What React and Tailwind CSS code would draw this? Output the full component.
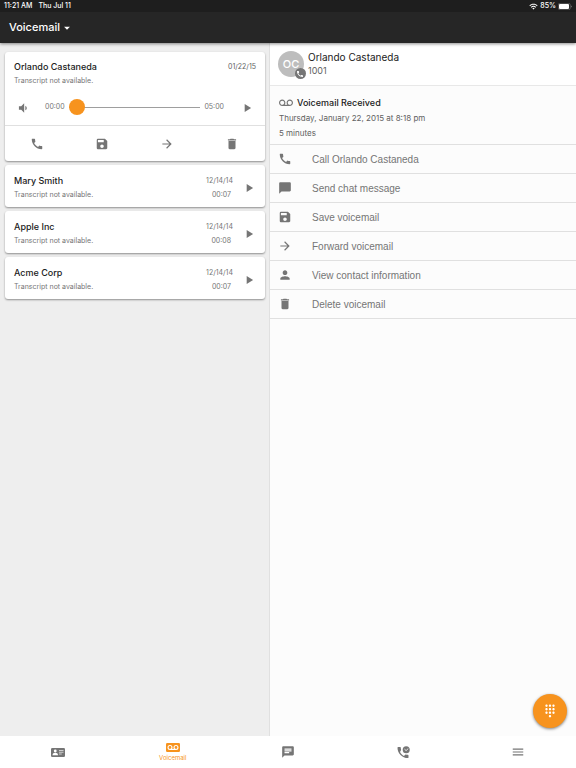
import React, { useState } from "react";
import {
    MdArrowDropDown,
    MdArrowForward,
    MdCall,
    MdChat,
    MdChatBubble,
    MdDelete,
    MdDialpad,
    MdMenu,
    MdPerson,
    MdPlayArrow,
    MdSave,
    MdVoicemail,
    MdVolumeDown,
    MdWifi,
} from "react-icons/md";

const messages = [
    { name: "Mary Smith", date: "12/14/14", length: "00:07" },
    { name: "Apple Inc", date: "12/14/14", length: "00:08" },
    { name: "Acme Corp", date: "12/14/14", length: "00:07" },
];

const cardActions = [
    { label: "Call", icon: MdCall },
    { label: "Save", icon: MdSave },
    { label: "Forward", icon: MdArrowForward },
    { label: "Delete", icon: MdDelete },
];

const detailActions = [
    { label: "Call Orlando Castaneda", icon: MdCall },
    { label: "Send chat message", icon: MdChatBubble },
    { label: "Save voicemail", icon: MdSave },
    { label: "Forward voicemail", icon: MdArrowForward },
    { label: "View contact information", icon: MdPerson },
    { label: "Delete voicemail", icon: MdDelete },
];

function ContactCardIcon() {
    return (
        <svg viewBox="0 0 28 18" className="h-[9px] w-[14px]" aria-hidden="true">
            <rect width="28" height="18" rx="2.5" fill="#757575" />
            <circle cx="8.5" cy="6" r="2.8" fill="#fff" />
            <path d="M3 14.5c0-3.2 2.6-4.8 5.5-4.8s5.500 1.600 5.500 4.800z" fill="#fff" />
            <path d="M16 5h9M16 8.500h9M16 12h5.500" stroke="#fff" strokeWidth="1.300" />
        </svg>
    );
}

function VoicemailTabIcon() {
    return (
        <svg viewBox="0 0 28 18" className="h-[9px] w-[14px]" aria-hidden="true">
            <rect width="28" height="18" rx="2.5" fill="#f7931e" />
            <g fill="none" stroke="#fff" strokeWidth="2.2">
                <circle cx="8" cy="9" r="3.9" />
                <circle cx="20" cy="9" r="3.9" />
                <path d="M8 12.9h12" />
            </g>
        </svg>
    );
}

function CallHistoryIcon() {
    return (
        <svg viewBox="0 0 24 24" className="size-[13px]" aria-hidden="true">
            <path
                d="M5.6 11.2c1.6 3.1 4.1 5.6 7.2 7.2l2.4-2.4c.3-.3.7-.4 1.1-.3 1.2.4 2.5.6 3.8.6.6 0 1.1.5 1.1 1.1v3.8c0 .6-.5 1.1-1.1 1.1C9.8 22.3.9 13.4.9 3.1.9 2.5 1.4 2 2 2h3.900c.6 0 1.1.5 1.1 1.1 0 1.3.2 2.6.6 3.8.1.4 0 .8-.3 1.1z"
                fill="#757575"
            />
            <circle cx="17" cy="7" r="6.5" fill="#757575" />
            <path d="M13.8 5.8l3 2.7 4-3.8" fill="none" stroke="#fff" strokeWidth="1.5" />
        </svg>
    );
}

function BatteryIcon() {
    return (
        <svg viewBox="0 0 28 14" className="h-[7px] w-[14px]" aria-hidden="true">
            <rect x="0.5" y="0.5" width="24" height="13" rx="3.5" fill="none" stroke="#8a8a8a" />
            <rect x="2" y="2" width="20" height="10" rx="2" fill="#fff" />
            <path d="M26 5v4c2-.8 2-3.2 0-4z" fill="#8a8a8a" />
        </svg>
    );
}

function Header() {
    return (
        <header className="relative z-10 shrink-0 bg-[#262626] text-white shadow-[0_1px_3px_rgba(0,0,0,0.45)]">
            <div className="flex h-3 items-center justify-between bg-[#1e1e1e] px-1 text-[7px] font-medium">
                <div className="flex gap-[6px]">
                    <span>11:21 AM</span>
                    <span>Thu Jul 11</span>
                </div>
                <div className="flex items-center gap-[2px]">
                    <MdWifi className="size-[9px]" />
                    <span>85%</span>
                    <BatteryIcon />
                </div>
            </div>
            <button type="button" className="flex h-[31px] items-center pl-[9px] text-[11px] font-medium">
                Voicemail
                <MdArrowDropDown className="size-[14px]" />
            </button>
        </header>
    );
}

function ActiveCard() {
    const [position, setPosition] = useState(0);

    return (
        <article className="rounded-[3px] bg-white shadow-[0_1px_2px_rgba(0,0,0,0.4)]">
            <div className="flex justify-between px-[9px] pt-2">
                <div>
                    <h2 className="text-[9px] leading-[14px] font-medium text-[#212121]">Orlando Castaneda</h2>
                    <p className="text-[7px] leading-[14px] text-[#757575]">Transcript not available.</p>
                </div>
                <span className="text-[7px] leading-[14px] text-[#616161]">01/22/15</span>
            </div>
            <div className="flex h-[37px] items-center pt-[2px] pr-[11px] pl-[11px] text-[7px] text-[#757575]">
                <button type="button" aria-label="Speaker">
                    <MdVolumeDown className="size-[14px]" />
                </button>
                <span className="ml-[15px]">00:00</span>
                <input
                    type="range"
                    aria-label="Playback position"
                    min="0"
                    max="300"
                    value={position}
                    onChange={(e) => setPosition(Number(e.target.value))}
                    className="mx-1 h-4 min-w-0 flex-1 appearance-none bg-transparent [&::-webkit-slider-runnable-track]:h-px [&::-webkit-slider-runnable-track]:bg-[#9e9e9e] [&::-webkit-slider-thumb]:-mt-2 [&::-webkit-slider-thumb]:size-4 [&::-webkit-slider-thumb]:appearance-none [&::-webkit-slider-thumb]:rounded-full [&::-webkit-slider-thumb]:bg-[#f7931e]"
                />
                <span>05:00</span>
                <button type="button" aria-label="Play" className="ml-4">
                    <MdPlayArrow className="size-[14px]" />
                </button>
            </div>
            <div className="grid h-9 grid-cols-4 border-t border-[#e0e0e0] text-[#757575]">
                {cardActions.map(({ label, icon: Icon }) => (
                    <button key={label} type="button" aria-label={label} className="flex items-center justify-center">
                        <Icon className="size-[14px]" />
                    </button>
                ))}
            </div>
        </article>
    );
}

function MessageCard({ name, date, length }) {
    return (
        <article className="flex items-center rounded-[3px] bg-white px-[9px] pt-[9px] pb-[5px] shadow-[0_1px_2px_rgba(0,0,0,0.4)]">
            <div className="flex-1">
                <h2 className="text-[9px] leading-[14px] font-medium text-[#212121]">{name}</h2>
                <p className="text-[7px] leading-[14px] text-[#757575]">Transcript not available.</p>
            </div>
            <div className="mr-[9px] text-right text-[7px] leading-[14px] text-[#757575]">
                <p>{date}</p>
                <p className="pr-[2px]">{length}</p>
            </div>
            <button type="button" aria-label={`Play ${name}`} className="text-[#757575]">
                <MdPlayArrow className="size-[14px]" />
            </button>
        </article>
    );
}

function Details() {
    return (
        <section className="min-w-0 flex-1 border-l border-[#e0e0e0] bg-[#fcfcfc]">
            <div className="flex h-[43px] items-center border-b border-[#e8e8e8] bg-white pl-2">
                <div className="relative flex size-[26px] items-center justify-center rounded-full bg-[#bdbdbd] text-[11px] font-medium text-white">
                    OC
                    <span className="absolute -right-[2px] -bottom-[2px] flex size-[11px] items-center justify-center rounded-full bg-[#757575]">
                        <MdCall className="size-2" />
                    </span>
                </div>
                <div className="ml-1 leading-[14px]">
                    <h2 className="text-[10px] text-[#212121]">Orlando Castaneda</h2>
                    <p className="text-[9px] text-[#616161]">1001</p>
                </div>
            </div>
            <div className="border-b border-[#e0e0e0] pt-2 pb-[3px] pl-[9px] text-[8px] leading-[15px] text-[#616161]">
                <h3 className="flex items-center gap-1 text-[9px] leading-[17px] font-medium text-[#212121]">
                    <MdVoicemail className="size-[14px] text-[#757575]" />
                    Voicemail Received
                </h3>
                <p>Thursday, January 22, 2015 at 8:18 pm</p>
                <p>5 minutes</p>
            </div>
            <ul className="font-['Liberation_Sans',sans-serif] text-[10px] text-[#757575]">
                {detailActions.map(({ label, icon: Icon }) => (
                    <li key={label} className="border-b border-[#e0e0e0]">
                        <button type="button" className="flex h-7 w-full items-center gap-5 pl-2">
                            <Icon className="size-[14px]" />
                            {label}
                        </button>
                    </li>
                ))}
            </ul>
        </section>
    );
}

function BottomNav() {
    return (
        <nav className="grid h-8 shrink-0 grid-cols-5 bg-white text-[#757575]">
            <a href="#contacts" aria-label="Contacts" className="flex items-center justify-center">
                <ContactCardIcon />
            </a>
            <a href="#voicemail" className="flex flex-col items-center justify-center gap-[2px] text-[6px] leading-[8px] text-[#f7931e]">
                <VoicemailTabIcon />
                Voicemail
            </a>
            <a href="#chat" aria-label="Chat" className="flex items-center justify-center">
                <MdChat className="size-[14px]" />
            </a>
            <a href="#history" aria-label="Call history" className="flex items-center justify-center">
                <CallHistoryIcon />
            </a>
            <a href="#menu" aria-label="Menu" className="flex items-center justify-center">
                <MdMenu className="size-[14px]" />
            </a>
        </nav>
    );
}

function App() {
    return (
        <div className="flex h-screen flex-col font-['Inter',sans-serif]">
            <Header />
            <main className="relative flex min-h-0 flex-1">
                <section className="flex w-[46.7%] flex-col gap-1 bg-[#eeeeee] pt-[9px] pr-1 pl-[5px]">
                    <ActiveCard />
                    {messages.map((message) => (
                        <MessageCard key={message.name} {...message} />
                    ))}
                </section>
                <Details />
                <button
                    type="button"
                    aria-label="Dialpad"
                    className="absolute right-[9px] bottom-2 flex size-[34px] items-center justify-center rounded-full bg-[#f7931e] text-white shadow-[0_1px_3px_rgba(0,0,0,0.5)]"
                >
                    <MdDialpad className="size-[14px]" />
                </button>
            </main>
            <BottomNav />
        </div>
    );
}

export default App;
